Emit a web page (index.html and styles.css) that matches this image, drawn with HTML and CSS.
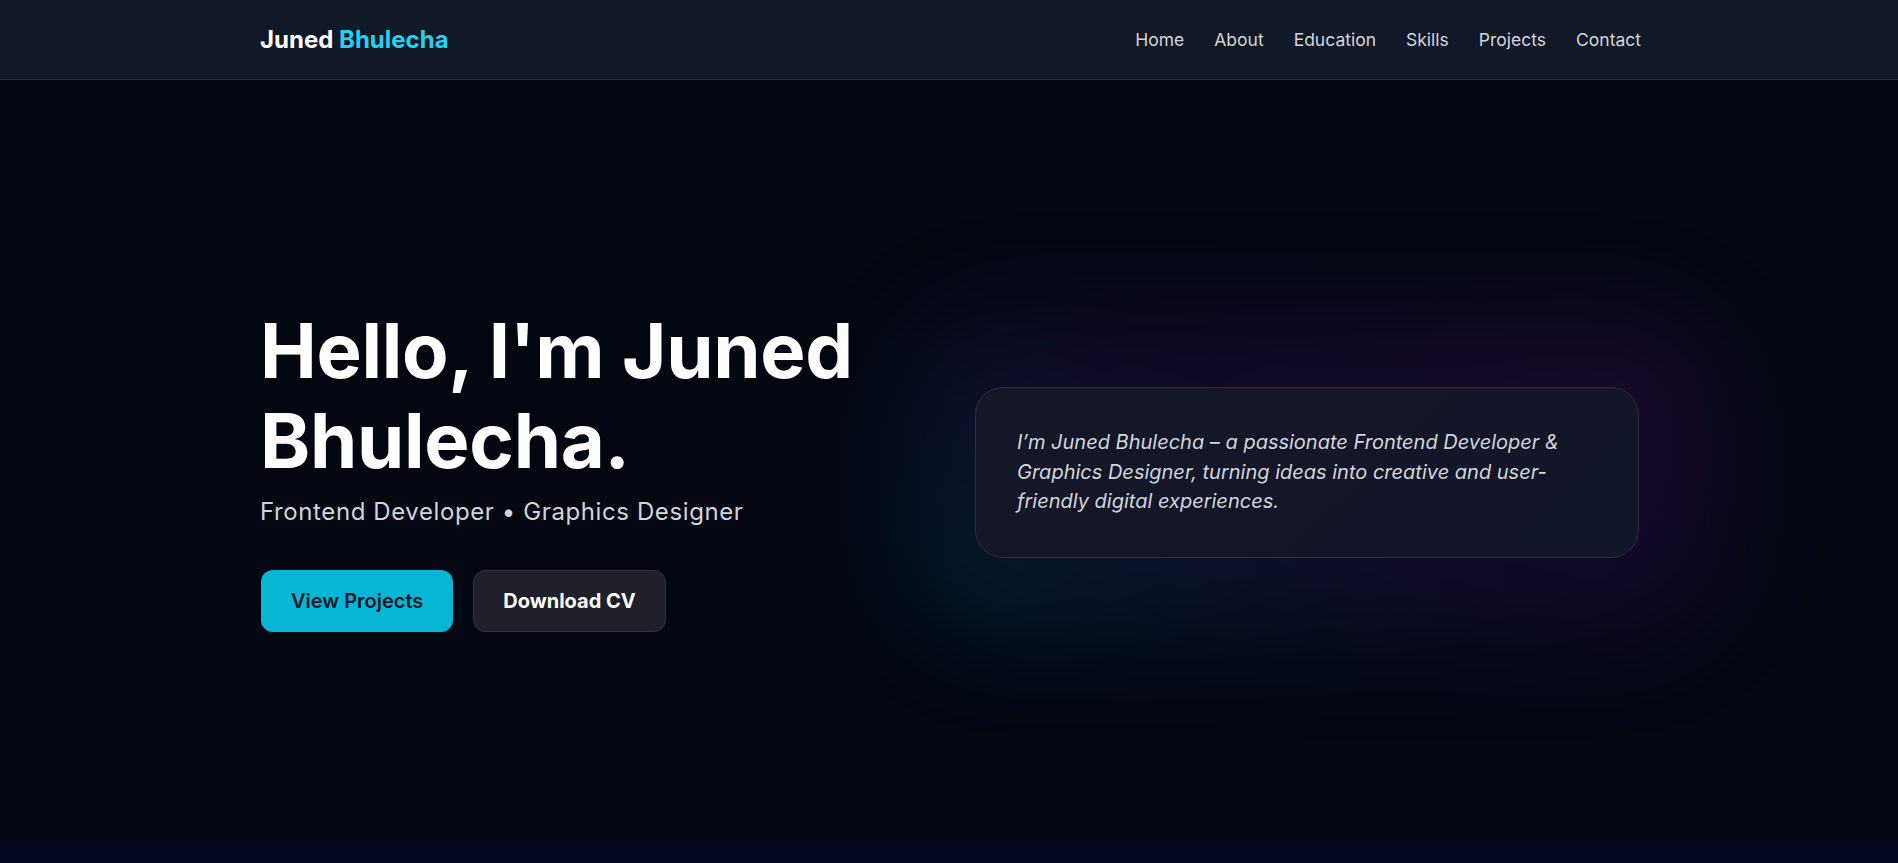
FILE: index.html
```html
<!DOCTYPE html>
<html lang="en">
<head>
<meta charset="utf-8">
<title>Juned Bhulecha</title>
<link rel="stylesheet" href="styles.css">
</head>
<body>
<header class="nav">
  <div class="container nav-inner">
    <a class="logo" href="#">Juned <span class="logo-accent">Bhulecha</span></a>
    <nav class="nav-links">
      <a href="#">Home</a>
      <a href="#">About</a>
      <a href="#">Education</a>
      <a href="#">Skills</a>
      <a href="#">Projects</a>
      <a href="#">Contact</a>
    </nav>
  </div>
</header>
<main>
  <section class="hero">
    <div class="container hero-grid">
      <div class="hero-left">
        <h1 class="hero-title">Hello, I'm Juned Bhulecha.</h1>
        <p class="hero-sub">Frontend Developer • Graphics Designer</p>
        <div class="hero-actions">
          <a class="btn btn-primary" href="#">View Projects</a>
          <a class="btn btn-secondary" href="#">Download CV</a>
        </div>
      </div>
      <div class="hero-right">
        <div class="glow"></div>
        <div class="card">
          <p class="card-text">I’m Juned Bhulecha – a passionate Frontend Developer &amp; Graphics Designer, turning ideas into creative and user-friendly digital experiences.</p>
        </div>
      </div>
    </div>
  </section>
  <section class="next"></section>
</main>
</body>
</html>
```

FILE: styles.css
```css
* { box-sizing: border-box; }
html, body { margin: 0; padding: 0; }
body {
  background: #030712;
  color: #ffffff;
  font-family: Inter, "Noto Sans", sans-serif;
  overflow: hidden;
}
a { text-decoration: none; color: inherit; }

.container {
  width: 1380px;
  margin: 0 auto;
}

.nav {
  background: #111827;
  border-bottom: 1px solid #262b38;
  height: 80px;
}
.nav-inner {
  height: 79px;
  display: flex;
  align-items: center;
  justify-content: space-between;
}
.logo {
  font-size: 24px;
  font-weight: 700;
  letter-spacing: 0;
  color: #ffffff;
  padding-left: 1px;
}
.logo-accent { color: #22d3ee; }
.nav-links {
  display: flex;
  gap: 30px;
  margin-right: -2px;
}
.nav-links a {
  font-size: 17.5px;
  color: #d1d5db;
}

.hero {
  height: 762px;
  background: #030712;
  display: flex;
  align-items: center;
  padding-top: 14px;
}
.hero-grid {
  display: grid;
  grid-template-columns: 665px 664px;
  column-gap: 51px;
  align-items: center;
}
.hero-title {
  margin: 0;
  font-size: 76px;
  line-height: 90px;
  font-weight: 700;
  letter-spacing: -0.3px;
  color: #ffffff;
  padding-left: 1px;
}
.hero-sub {
  margin: 11px 0 0;
  font-size: 24px;
  line-height: 32px;
  letter-spacing: 0.6px;
  color: #d1d5db;
  padding-left: 1px;
}
.hero-actions {
  margin-top: 42px;
  display: flex;
  gap: 20px;
  padding-left: 2px;
}
.btn {
  display: inline-block;
  height: 62px;
  padding: 16px 29px;
  border-radius: 12px;
  font-size: 20px;
  line-height: 28px;
  font-weight: 600;
  border: 1px solid transparent;
}
.btn-primary {
  background: #06b6d4;
  color: #0f1a2c;
}
.btn-secondary {
  background: #1f2029;
  border-color: #30323c;
  color: #ffffff;
  font-weight: 700;
}

.hero-right {
  position: relative;
  padding-top: 9px;
}
.glow {
  position: absolute;
  left: -80px;
  right: -90px;
  top: -70px;
  bottom: -85px;
  border-radius: 110px;
  background: linear-gradient(30deg, rgba(6, 130, 150, 0.18) 0%, rgba(70, 25, 110, 0.22) 55%, rgba(110, 30, 130, 0.20) 100%);
  filter: blur(45px);
}
.card {
  position: relative;
  border: 1px solid #2a2e3d;
  border-radius: 28px;
  background: linear-gradient(135deg, #131726 0%, #121629 100%);
  padding: 40px 41px;
}
.card-text {
  margin: 0;
  font-size: 20px;
  line-height: 29.5px;
  font-style: italic;
  color: #d1d5db;
}

.next {
  height: 40px;
  background: #020820;
}
```
